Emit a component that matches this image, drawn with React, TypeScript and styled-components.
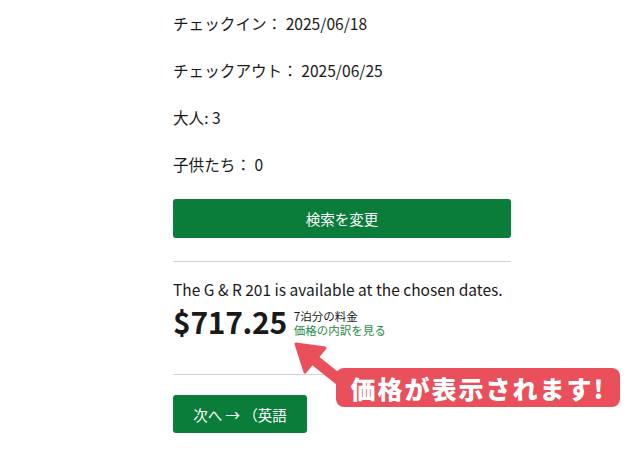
import React from 'react';
import styled, { createGlobalStyle } from 'styled-components';

const GlobalStyle = createGlobalStyle`
  body {
    margin: 0;
    background: #ffffff;
    font-family: "Noto Sans CJK JP", "Noto Sans", sans-serif;
    color: #1a1a1a;
  }
`;

const Page = styled.div`
  position: relative;
  width: 640px;
  height: 450px;
  overflow: hidden;
`;

const Column = styled.div`
  width: 338px;
  margin-left: 173px;
  padding-top: 12px;
  display: flex;
  flex-direction: column;
`;

const InfoLine = styled.p`
  margin: 0 0 25px;
  font-size: 15.6px;
  line-height: 22px;
  &:last-of-type {
    margin-bottom: 24px;
  }
`;

const GreenButton = styled.button<{ $wide?: boolean }>`
  width: ${(p) => (p.$wide ? '338px' : '134px')};
  height: ${(p) => (p.$wide ? '39px' : '38px')};
  border: none;
  border-radius: 3px;
  background: #0b7d3b;
  color: #ffffff;
  font-family: inherit;
  font-size: 14.5px;
  padding: 0;
  cursor: pointer;
`;

const Divider = styled.hr<{ $top: number; $bottom: number }>`
  width: 100%;
  border: none;
  border-top: 1px solid #d2d2d2;
  margin: ${(p) => p.$top}px 0 ${(p) => p.$bottom}px;
`;

const Available = styled.div`
  font-size: 15.5px;
  line-height: 22px;
  white-space: nowrap;
`;

const PriceRow = styled.div`
  display: flex;
  align-items: center;
  gap: 7px;
  margin-top: 2px;
`;

const Price = styled.div`
  font-size: 30px;
  font-weight: 700;
  line-height: 38px;
  letter-spacing: -0.3px;
`;

const PriceMeta = styled.div`
  display: flex;
  flex-direction: column;
  font-size: 11.5px;
  line-height: 14px;
  margin-top: 3px;
`;

const BreakdownLink = styled.a`
  color: #2c8a4a;
  text-decoration: none;
`;

const Callout = styled.div`
  position: absolute;
  left: 336px;
  top: 368px;
  width: 284px;
  height: 39px;
  border-radius: 8px;
  background: #e9505c;
  color: #ffffff;
  font-size: 25px;
  font-weight: 900;
  letter-spacing: 2px;
  display: flex;
  align-items: center;
  justify-content: center;
`;

const ArrowSvg = styled.svg`
  position: absolute;
  left: 0;
  top: 0;
  pointer-events: none;
`;

export default function App() {
  return (
    <Page>
      <GlobalStyle />
      <Column>
        <InfoLine>チェックイン： 2025/06/18</InfoLine>
        <InfoLine>チェックアウト： 2025/06/25</InfoLine>
        <InfoLine>大人: 3</InfoLine>
        <InfoLine>子供たち： 0</InfoLine>
        <GreenButton $wide>検索を変更</GreenButton>
        <Divider $top={23} $bottom={16} />
        <Available>The G &amp; R 201 is available at the chosen dates.</Available>
        <PriceRow>
          <Price>$717.25</Price>
          <PriceMeta>
            <span>7泊分の料金</span>
            <BreakdownLink href="#">価格の内訳を見る</BreakdownLink>
          </PriceMeta>
        </PriceRow>
        <Divider $top={34} $bottom={20} />
        <div>
          <GreenButton>次へ → （英語</GreenButton>
        </div>
      </Column>
      <ArrowSvg width="640" height="450" viewBox="0 0 640 450">
        <line x1="312" y1="358" x2="352" y2="390" stroke="#e9505c" strokeWidth="11" />
        <polygon
          points="296,344 325,348 305,372"
          fill="#e9505c"
          stroke="#e9505c"
          strokeWidth="3"
          strokeLinejoin="round"
        />
      </ArrowSvg>
      <Callout>価格が表示されます!</Callout>
    </Page>
  );
}
